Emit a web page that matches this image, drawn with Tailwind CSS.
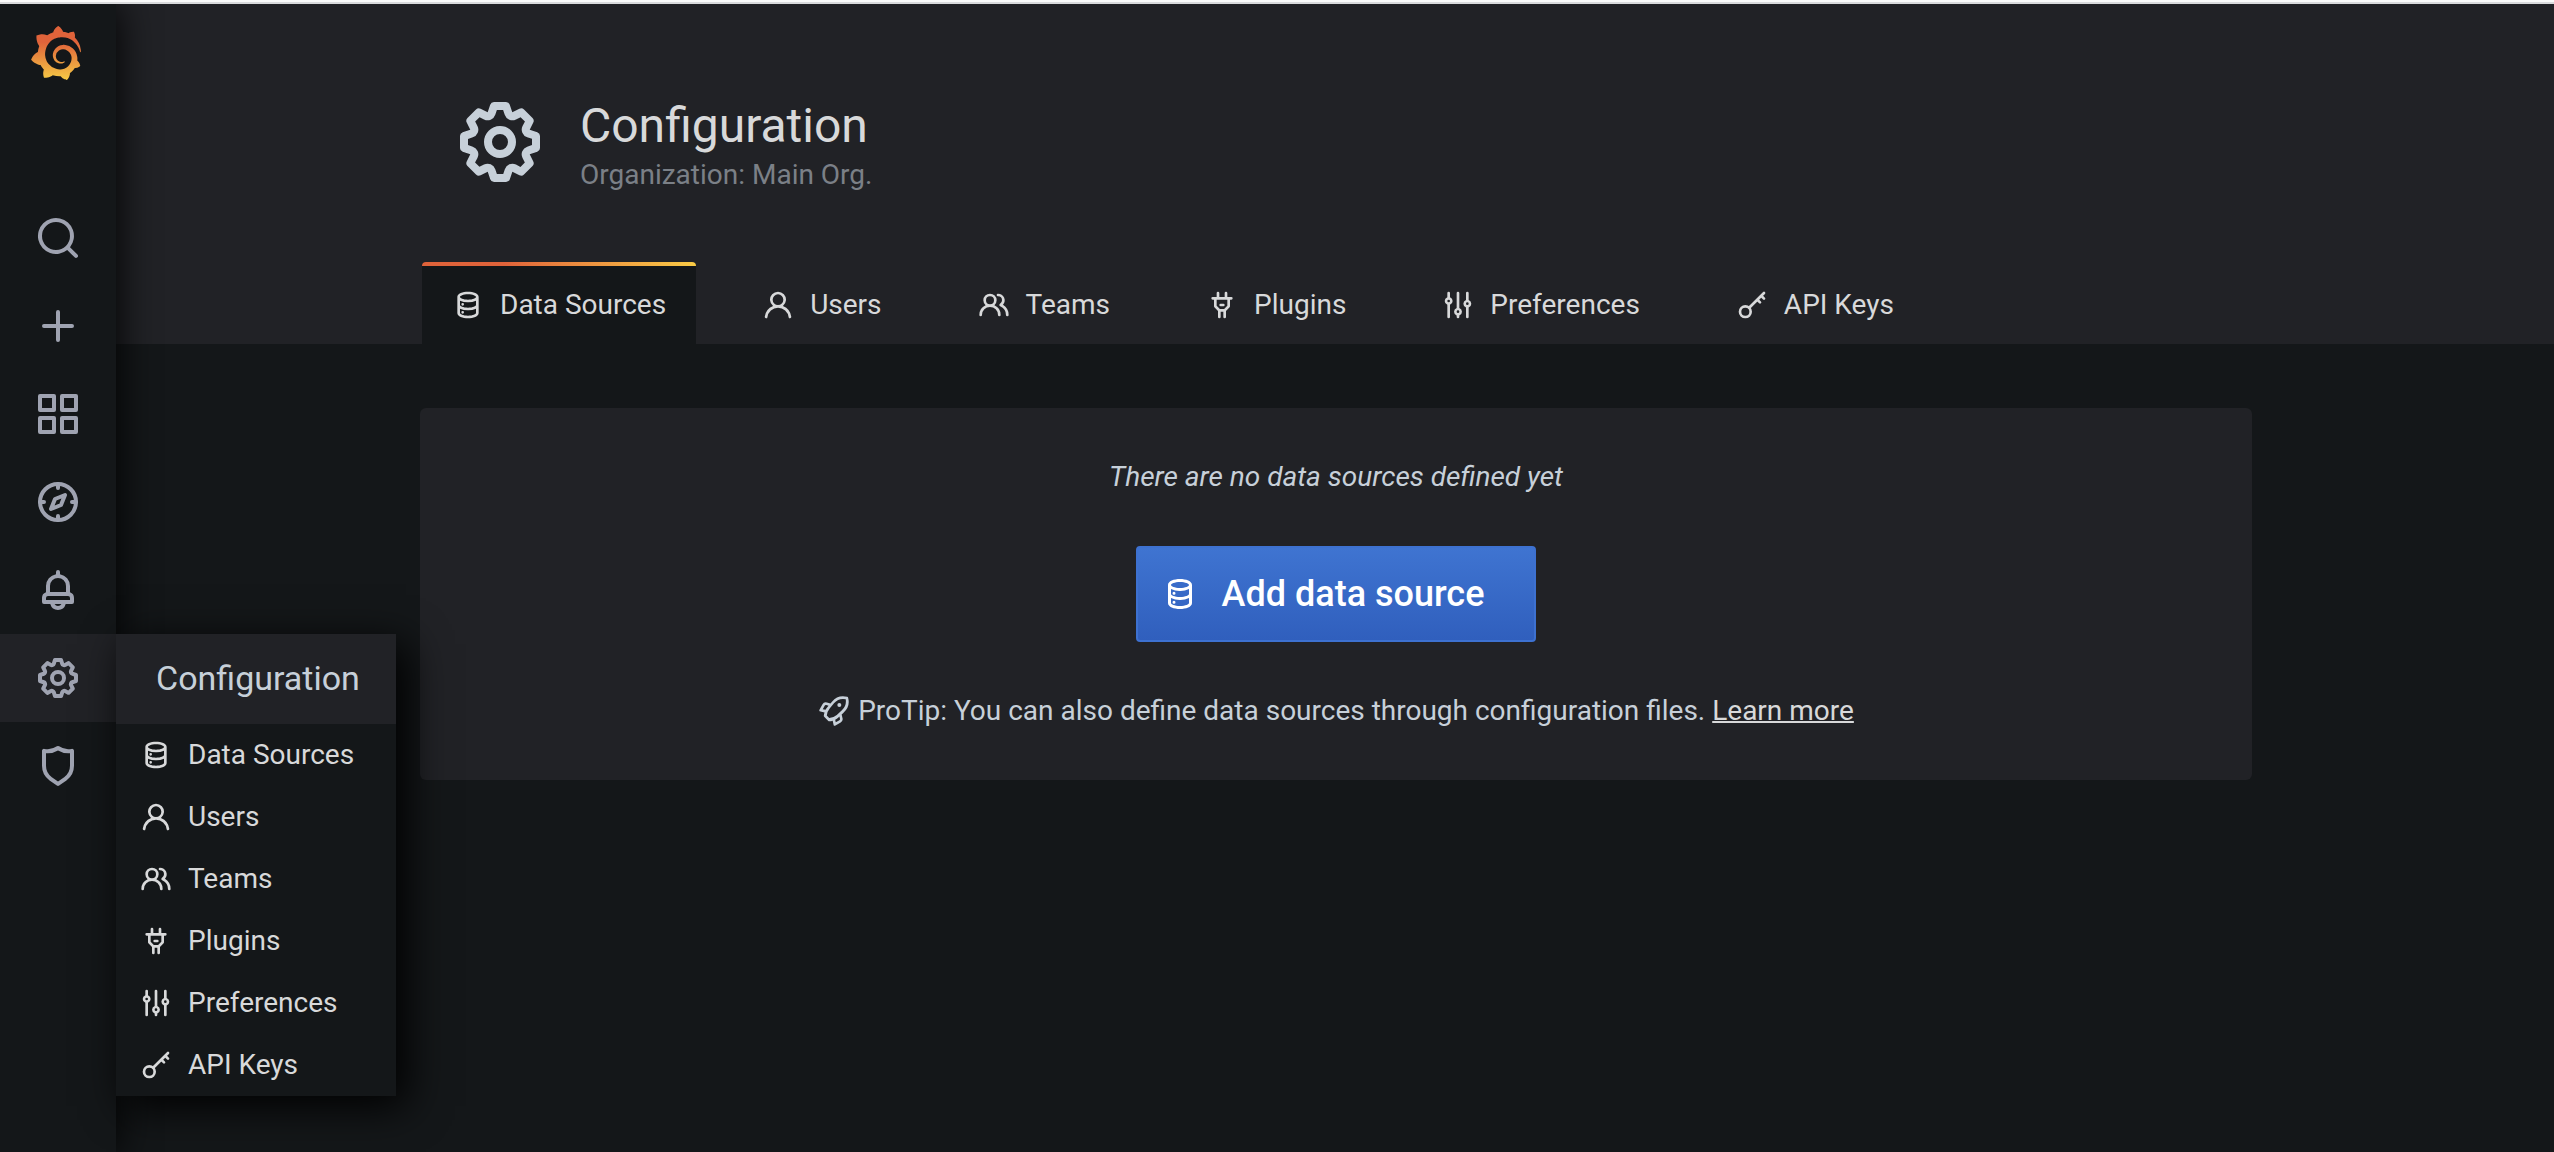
<!DOCTYPE html>
<html lang="en">
<head>
<meta charset="utf-8">
<meta name="viewport" content="width=device-width, initial-scale=1">
<title>Configuration: Data Sources - Grafana</title>
<script src="https://cdn.jsdelivr.net/npm/@tailwindcss/browser@4"></script>
</head>
<body class="min-h-screen flex flex-col bg-[#141719] font-[Roboto,sans-serif] text-[28px] leading-[42px] text-[#c7d0d9]">

<svg class="absolute size-0" aria-hidden="true">
  <defs>
  <linearGradient id="brand" x1="0" y1="0" x2="0" y2="1">
    <stop offset="0.3" stop-color="#e0633a"/>
    <stop offset="1" stop-color="#f5ca45"/>
  </linearGradient>
  </defs>
  <symbol id="logo" viewBox="0 0 24 24"><path d="M23.02 10.59a8.578 8.578 0 0 0-.862-3.034 8.911 8.911 0 0 0-1.789-2.445c.337-1.342-.413-2.505-.413-2.505-1.292-.08-2.113.4-2.416.62-.052-.02-.102-.044-.154-.064-.22-.089-.446-.172-.677-.247-.231-.073-.47-.14-.711-.197a9.867 9.867 0 0 0-.875-.161C14.557.753 12.94 0 12.94 0c-1.804 1.145-2.147 2.744-2.147 2.744l-.018.093c-.098.029-.2.057-.298.088-.138.042-.275.094-.413.143-.138.055-.275.107-.41.166a8.869 8.869 0 0 0-1.557.87l-.063-.029c-2.497-.955-4.716.195-4.716.195-.203 2.658.996 4.33 1.235 4.636a11.608 11.608 0 0 0-.607 2.635C1.636 12.677.953 15.014.953 15.014c1.926 2.214 4.171 2.351 4.171 2.351.003-.002.006-.002.006-.005.285.509.615.994.986 1.446.156.19.32.371.488.548-.704 2.009.099 3.68.099 3.68 2.144.08 3.553-.937 3.849-1.173a9.784 9.784 0 0 0 3.164.501h.08l.055-.003.107-.002.103-.005.003.002c1.01 1.44 2.788 1.646 2.788 1.646 1.264-1.332 1.337-2.653 1.337-2.94v-.058c0-.02-.003-.039-.003-.06.265-.187.52-.387.758-.6a7.875 7.875 0 0 0 1.415-1.7c1.43.083 2.437-.885 2.437-.885-.236-1.49-1.085-2.216-1.264-2.354l-.018-.013-.016-.013a.217.217 0 0 1-.031-.02c.008-.092.016-.18.02-.27.011-.162.016-.323.016-.48v-.253l-.005-.098-.008-.135a1.891 1.891 0 0 0-.01-.13c-.003-.042-.008-.083-.013-.125l-.016-.124-.018-.122a6.215 6.215 0 0 0-2.032-3.73 6.015 6.015 0 0 0-3.222-1.46 6.292 6.292 0 0 0-.85-.048l-.107.002h-.063l-.044.003-.104.008a4.777 4.777 0 0 0-3.335 1.695c-.332.4-.592.84-.768 1.297a4.594 4.594 0 0 0-.312 1.817l.003.091c.005.055.007.11.013.164a3.615 3.615 0 0 0 .698 1.82 3.53 3.53 0 0 0 1.827 1.282c.33.098.66.14.971.137.039 0 .078 0 .114-.002l.063-.003c.02 0 .041-.003.062-.003.034-.002.065-.007.099-.01.007 0 .018-.003.028-.003l.031-.005.06-.008a1.18 1.18 0 0 0 .112-.02c.036-.008.072-.013.109-.024a2.634 2.634 0 0 0 .914-.415c.028-.02.056-.041.085-.065a.248.248 0 0 0 .039-.35.244.244 0 0 0-.309-.06l-.078.042c-.09.044-.184.083-.283.116a2.476 2.476 0 0 1-.475.096c-.028.003-.054.006-.083.006l-.083.002c-.026 0-.054 0-.08-.002l-.102-.006h-.012l-.024.006c-.016-.003-.031-.003-.044-.006-.031-.002-.06-.007-.091-.01a2.59 2.59 0 0 1-.724-.213 2.557 2.557 0 0 1-.667-.438 2.52 2.52 0 0 1-.805-1.475 2.306 2.306 0 0 1-.029-.444l.006-.122v-.023l.002-.031c.003-.021.003-.04.005-.06a3.163 3.163 0 0 1 1.352-2.29 3.12 3.12 0 0 1 .937-.43 2.946 2.946 0 0 1 .776-.101h.06l.07.002.045.003h.026l.07.005a4.041 4.041 0 0 1 1.635.49 3.94 3.94 0 0 1 1.602 1.662 3.77 3.77 0 0 1 .397 1.414l.005.076.003.075c.002.026.002.05.002.075 0 .024.003.052 0 .07v.065l-.002.073-.008.174a6.195 6.195 0 0 1-.08.639 5.1 5.1 0 0 1-.267.927 5.31 5.31 0 0 1-.624 1.13 5.052 5.052 0 0 1-3.237 2.014 4.82 4.82 0 0 1-.649.066l-.039.003h-.287a6.607 6.607 0 0 1-1.716-.265 6.776 6.776 0 0 1-3.4-2.274 6.75 6.75 0 0 1-.746-1.15 6.616 6.616 0 0 1-.714-2.596l-.005-.083-.002-.02v-.056l-.003-.073v-.096l-.003-.104v-.07l.003-.163c.008-.22.026-.45.054-.678a8.707 8.707 0 0 1 .28-1.355c.128-.444.286-.872.473-1.277a7.04 7.04 0 0 1 1.456-2.1 5.925 5.925 0 0 1 .953-.763c.169-.111.343-.213.524-.306.089-.05.182-.091.273-.135.047-.02.093-.042.138-.062a7.177 7.177 0 0 1 .714-.267l.145-.045c.049-.015.098-.026.148-.041.098-.029.197-.052.296-.076.049-.013.1-.02.15-.033l.15-.032.151-.028.076-.013.075-.01.153-.024c.057-.01.114-.013.171-.023l.169-.021c.036-.003.073-.008.106-.01l.073-.008.036-.003.042-.002c.057-.003.114-.008.171-.01l.086-.006h.023l.037-.003.145-.007a7.999 7.999 0 0 1 1.708.125 7.917 7.917 0 0 1 2.048.68 8.253 8.253 0 0 1 1.672 1.09l.09.077.089.078c.06.052.114.107.171.159.057.052.112.106.166.16.052.055.107.107.159.164a8.671 8.671 0 0 1 1.41 1.978c.012.026.028.052.04.078l.04.078.075.156c.023.051.05.1.07.153l.065.15a8.848 8.848 0 0 1 .45 1.34.19.19 0 0 0 .201.142.186.186 0 0 0 .172-.184c.01-.246.002-.532-.024-.856z"/></symbol>
  <symbol id="search" viewBox="0 0 24 24"><path d="M21.71,20.29,18,16.61A9,9,0,1,0,16.61,18l3.68,3.68a1,1,0,0,0,1.42,0A1,1,0,0,0,21.71,20.29ZM11,18a7,7,0,1,1,7-7A7,7,0,0,1,11,18Z"/></symbol>
  <symbol id="plus" viewBox="0 0 24 24"><path d="M19,11H13V5a1,1,0,0,0-2,0v6H5a1,1,0,0,0,0,2h6v6a1,1,0,0,0,2,0V13h6a1,1,0,0,0,0-2Z"/></symbol>
  <symbol id="apps" viewBox="0 0 24 24"><path d="M10,13H3a1,1,0,0,0-1,1v7a1,1,0,0,0,1,1h7a1,1,0,0,0,1-1V14A1,1,0,0,0,10,13ZM9,20H4V15H9ZM21,2H14a1,1,0,0,0-1,1v7a1,1,0,0,0,1,1h7a1,1,0,0,0,1-1V3A1,1,0,0,0,21,2ZM20,9H15V4h5Zm1,4H14a1,1,0,0,0-1,1v7a1,1,0,0,0,1,1h7a1,1,0,0,0,1-1V14A1,1,0,0,0,21,13Zm-1,7H15V15h5ZM10,2H3A1,1,0,0,0,2,3v7a1,1,0,0,0,1,1h7a1,1,0,0,0,1-1V3A1,1,0,0,0,10,2ZM9,9H4V4H9Z"/></symbol>
  <symbol id="compass" viewBox="0 0 24 24"><g fill="none" stroke="currentColor" stroke-width="2" stroke-linecap="round" stroke-linejoin="round"><circle cx="12" cy="12" r="9"/><path d="M12 3v2M12 19v2M3 12h2M19 12h2M15.5 8.5l-2 5-5 2 2-5z"/></g></symbol>
  <symbol id="bell" viewBox="0 0 24 24"><path d="M18,13.18V10a6,6,0,0,0-5-5.91V3a1,1,0,0,0-2,0V4.09A6,6,0,0,0,6,10v3.18A3,3,0,0,0,4,16v2a1,1,0,0,0,1,1H8.14a4,4,0,0,0,7.72,0H19a1,1,0,0,0,1-1V16A3,3,0,0,0,18,13.18ZM8,10a4,4,0,0,1,8,0v3H8Zm4,10a2,2,0,0,1-1.72-1h3.44A2,2,0,0,1,12,20Zm6-3H6V16a1,1,0,0,1,1-1H17a1,1,0,0,1,1,1Z"/></symbol>
  <symbol id="cog" viewBox="0 0 24 24"><path d="M21.32,9.55l-1.89-.63.89-1.78A1,1,0,0,0,20.13,6L18,3.87a1,1,0,0,0-1.15-.19l-1.78.89-.63-1.89A1,1,0,0,0,13.5,2h-3a1,1,0,0,0-.95.68L8.92,4.57,7.14,3.68A1,1,0,0,0,6,3.87L3.87,6a1,1,0,0,0-.19,1.15l.89,1.78-1.89.63A1,1,0,0,0,2,10.5v3a1,1,0,0,0,.68.95l1.89.63-.89,1.78A1,1,0,0,0,3.87,18L6,20.13a1,1,0,0,0,1.15.19l1.78-.89.63,1.89a1,1,0,0,0,.95.68h3a1,1,0,0,0,.95-.68l.63-1.89,1.78.89A1,1,0,0,0,18,20.13L20.13,18a1,1,0,0,0,.19-1.15l-.89-1.78,1.89-.63A1,1,0,0,0,22,13.5v-3A1,1,0,0,0,21.32,9.55ZM20,12.78l-1.2.4A2,2,0,0,0,17.64,16l.57,1.14-1.1,1.1L16,17.64a2,2,0,0,0-2.79,1.16l-.4,1.2H11.22l-.4-1.2A2,2,0,0,0,8,17.64l-1.14.57-1.1-1.1L6.36,16A2,2,0,0,0,5.2,13.18L4,12.78V11.22l1.2-.4A2,2,0,0,0,6.36,8L5.79,6.89l1.1-1.1L8,6.36A2,2,0,0,0,10.82,5.2l.4-1.2h1.56l.4,1.2A2,2,0,0,0,16,6.36l1.14-.57,1.1,1.1L17.64,8a2,2,0,0,0,1.16,2.79l1.2.4ZM12,8a4,4,0,1,0,4,4A4,4,0,0,0,12,8Zm0,6a2,2,0,1,1,2-2A2,2,0,0,1,12,14Z"/></symbol>
  <symbol id="shield" viewBox="0 0 24 24"><path d="M19.63,3.65a1,1,0,0,0-.84-.2,8,8,0,0,1-6.22-1.27,1,1,0,0,0-1.14,0A8,8,0,0,1,5.21,3.45a1,1,0,0,0-.84.2A1,1,0,0,0,4,4.43v7.45a9,9,0,0,0,3.77,7.33l3.65,2.6a1,1,0,0,0,1.16,0l3.65-2.6A9,9,0,0,0,20,11.88V4.43A1,1,0,0,0,19.63,3.65ZM18,11.88a7,7,0,0,1-2.93,5.7L12,19.77,8.93,17.58A7,7,0,0,1,6,11.88V5.58a10,10,0,0,0,6-1.39,10,10,0,0,0,6,1.39Z"/></symbol>
  <symbol id="database" viewBox="0 0 24 24"><path d="M8,16.5a1,1,0,1,0,1,1A1,1,0,0,0,8,16.5ZM12,2C8,2,4,3.37,4,6V18c0,2.63,4,4,8,4s8-1.37,8-4V6C20,3.37,16,2,12,2Zm6,16c0,.71-2.28,2-6,2s-6-1.29-6-2V14.73A13.16,13.16,0,0,0,12,16a13.16,13.16,0,0,0,6-1.27Zm0-6c0,.71-2.28,2-6,2s-6-1.29-6-2V8.73A13.16,13.16,0,0,0,12,10a13.16,13.16,0,0,0,6-1.27ZM12,8C8.28,8,6,6.71,6,6s2.28-2,6-2,6,1.29,6,2S15.72,8,12,8ZM8,10.5a1,1,0,1,0,1,1A1,1,0,0,0,8,10.5Z"/></symbol>
  <symbol id="user" viewBox="0 0 24 24"><path d="M15.71,12.71a6,6,0,1,0-7.42,0,10,10,0,0,0-6.22,8.18,1,1,0,0,0,2,.22,8,8,0,0,1,15.9,0,1,1,0,0,0,1,.89h.11a1,1,0,0,0,.88-1.1A10,10,0,0,0,15.71,12.71ZM12,12a4,4,0,1,1,4-4A4,4,0,0,1,12,12Z"/></symbol>
  <symbol id="users" viewBox="0 0 24 24"><path d="M12.3,12.22A4.92,4.92,0,0,0,14,8.5a5,5,0,0,0-10,0,4.92,4.92,0,0,0,1.7,3.72A8,8,0,0,0,1,19.5a1,1,0,0,0,2,0,6,6,0,0,1,12,0,1,1,0,0,0,2,0A8,8,0,0,0,12.3,12.22ZM9,11.5a3,3,0,1,1,3-3A3,3,0,0,1,9,11.5Zm9.74.32A5,5,0,0,0,15,3.5a1,1,0,0,0,0,2,3,3,0,0,1,3,3,3,3,0,0,1-1.5,2.59,1,1,0,0,0-.5.84,1,1,0,0,0,.45.86l.39.26.13.07a7,7,0,0,1,4,6.38,1,1,0,0,0,2,0A9,9,0,0,0,18.74,11.82Z"/></symbol>
  <symbol id="plug" viewBox="0 0 24 24"><path d="M19,6H16V3a1,1,0,0,0-2,0V6H10V3A1,1,0,0,0,8,3V6H5A1,1,0,0,0,5,8H6v5a1,1,0,0,0,.29.71L9,16.41V21a1,1,0,0,0,2,0V17h2v4a1,1,0,0,0,2,0V16.41l2.71-2.7A1,1,0,0,0,18,13V8h1a1,1,0,0,0,0-2Zm-3,6.59L13.59,15H10.41L8,12.59V8h8ZM11,13h2a1,1,0,0,0,0-2H11a1,1,0,0,0,0,2Z"/></symbol>
  <symbol id="sliders" viewBox="0 0 24 24"><path d="M20,8.18V3a1,1,0,0,0-2,0V8.18a3,3,0,0,0,0,5.64V21a1,1,0,0,0,2,0V13.82a3,3,0,0,0,0-5.64ZM19,12a1,1,0,1,1,1-1A1,1,0,0,1,19,12Zm-6,2.18V3a1,1,0,0,0-2,0V14.18a3,3,0,0,0,0,5.64V21a1,1,0,0,0,2,0V19.82a3,3,0,0,0,0-5.64ZM12,18a1,1,0,1,1,1-1A1,1,0,0,1,12,18ZM6,6.18V3A1,1,0,0,0,4,3V6.18a3,3,0,0,0,0,5.64V21a1,1,0,0,0,2,0V11.82A3,3,0,0,0,6,6.18ZM5,10A1,1,0,1,1,6,9,1,1,0,0,1,5,10Z"/></symbol>
  <symbol id="key" viewBox="0 0 24 24"><g fill="none" stroke="currentColor" stroke-width="2" stroke-linecap="round" stroke-linejoin="round"><circle cx="7" cy="17" r="4"/><path d="M9.9 14.1L21 3M18.9 5.1L21 7.2M16 8l2 2"/></g></symbol>
  <symbol id="rocket" viewBox="0 0 24 24"><path fill-rule="evenodd" d="M22.601,2.062a1,1,0,0,0-.713-.713A11.252,11.252,0,0,0,10.47,4.972L9.354,6.296,6.75,5.668a2.777,2.777,0,0,0-3.387,1.357l-2.2,3.9a1,1,0,0,0,.661,1.469l3.074.659a13.42,13.42,0,0,0-.555,2.434,1,1,0,0,0,.284.836l3.1,3.1a1,1,0,0,0,.708.293c.028,0,.057,0,.086,0a12.169,12.169,0,0,0,2.492-.49l.644,3.004a1,1,0,0,0,1.469.661l3.905-2.202a3.035,3.035,0,0,0,1.375-3.304l-.668-2.76,1.237-1.137A11.204,11.204,0,0,0,22.601,2.062ZM3.572,10.723l1.556-2.766a.826.826,0,0,1,1.07-.375l1.718.416-.65.772A13.095,13.095,0,0,0,5.59,11.156ZM16.042,18.945l-2.715,1.532-.43-2.005a11.34,11.34,0,0,0,2.414-1.62l.743-.683.404,1.664A1.041,1.041,0,0,1,16.042,18.945ZM17.893,11.458l-3.8,3.493A9.774,9.774,0,0,1,8.42,17.265L6.6,15.431a10.083,10.083,0,0,1,2.3-5.556l3.1-3.633a9.263,9.263,0,0,1,8.79-3.03A9.21,9.21,0,0,1,17.893,11.458Z"/><circle cx="16" cy="7.5" r="1.5"/></symbol>
</svg>

<!-- Edge of the browser toolbar -->
<div class="relative z-20 h-1 shrink-0 border-b-2 border-[#d9dadc] bg-[#fafafa]"></div>

<div class="flex flex-1">
  <aside class="relative z-10 flex w-[116px] shrink-0 flex-col bg-[#141719] text-[#9fa3b1] shadow-[0_0_40px_#000]">
    <a href="#" aria-label="Home" class="flex h-[190px] justify-center pt-[22px] pr-1"><svg class="size-[54px]" fill="url(#brand)"><use href="#logo"/></svg></a>
    <nav aria-label="Main">
      <ul>
        <li><a href="#" aria-label="Search" class="flex h-[88px] items-center justify-center"><svg class="size-12 fill-current"><use href="#search"/></svg></a></li>
        <li><a href="#" aria-label="Create" class="flex h-[88px] items-center justify-center"><svg class="size-12 fill-current"><use href="#plus"/></svg></a></li>
        <li><a href="#" aria-label="Dashboards" class="flex h-[88px] items-center justify-center"><svg class="size-12 fill-current"><use href="#apps"/></svg></a></li>
        <li><a href="#" aria-label="Explore" class="flex h-[88px] items-center justify-center"><svg class="size-12 fill-current"><use href="#compass"/></svg></a></li>
        <li><a href="#" aria-label="Alerting" class="flex h-[88px] items-center justify-center"><svg class="size-12 fill-current"><use href="#bell"/></svg></a></li>
        <li class="relative bg-[#212226]">
          <a href="#" aria-label="Configuration" class="flex h-[88px] items-center justify-center"><svg class="size-12 fill-current"><use href="#cog"/></svg></a>
          <ul class="absolute top-0 left-full w-[280px] bg-[#141719] text-[#d8d9da] shadow-[10px_10px_40px_#000]">
            <li class="h-[90px] bg-[#212226] pl-10 text-[34px] leading-[88px] text-[#c7d0d9]"><a href="#">Configuration</a></li>
            <li><a href="#" class="flex h-[62px] items-center gap-4 px-6"><svg class="size-8 fill-current"><use href="#database"/></svg>Data Sources</a></li>
            <li><a href="#" class="flex h-[62px] items-center gap-4 px-6"><svg class="size-8 fill-current"><use href="#user"/></svg>Users</a></li>
            <li><a href="#" class="flex h-[62px] items-center gap-4 px-6"><svg class="size-8 fill-current"><use href="#users"/></svg>Teams</a></li>
            <li><a href="#" class="flex h-[62px] items-center gap-4 px-6"><svg class="size-8 fill-current"><use href="#plug"/></svg>Plugins</a></li>
            <li><a href="#" class="flex h-[62px] items-center gap-4 px-6"><svg class="size-8 fill-current"><use href="#sliders"/></svg>Preferences</a></li>
            <li><a href="#" class="flex h-[62px] items-center gap-4 px-6"><svg class="size-8 fill-current"><use href="#key"/></svg>API Keys</a></li>
          </ul>
        </li>
        <li><a href="#" aria-label="Server Admin" class="flex h-[88px] items-center justify-center"><svg class="size-12 fill-current"><use href="#shield"/></svg></a></li>
      </ul>
    </nav>
  </aside>

  <main class="min-w-0 flex-1">
    <header class="bg-[#212226] pl-0.5">
      <div class="mx-auto max-w-[1832px]">
        <div class="flex gap-8 px-8 pt-[90px] pb-[70px]">
          <svg class="size-24 shrink-0 fill-[#c7d0d9]"><use href="#cog"/></svg>
          <div>
            <h1 class="text-5xl leading-[64px] text-[#d8d9da]">Configuration</h1>
            <p class="leading-[34px] text-[#7b8087]">Organization: Main Org.</p>
          </div>
        </div>
        <nav aria-label="Configuration sections">
          <ul class="flex gap-9 px-0.5 text-[#d8d9da]">
            <li class="overflow-hidden rounded-t bg-[#141719]">
              <div class="h-1 bg-linear-to-r from-[#e0633a] from-30% to-[#f9cb45]"></div>
              <a href="#" aria-current="page" class="flex h-[78px] items-center gap-4 px-[30px]"><svg class="size-8 fill-current"><use href="#database"/></svg>Data Sources</a>
            </li>
            <li class="pt-1"><a href="#" class="flex h-[78px] items-center gap-4 px-[30px]"><svg class="size-8 fill-current"><use href="#user"/></svg>Users</a></li>
            <li class="pt-1"><a href="#" class="flex h-[78px] items-center gap-4 px-[30px]"><svg class="size-8 fill-current"><use href="#users"/></svg>Teams</a></li>
            <li class="pt-1"><a href="#" class="flex h-[78px] items-center gap-4 px-[30px]"><svg class="size-8 fill-current"><use href="#plug"/></svg>Plugins</a></li>
            <li class="pt-1"><a href="#" class="flex h-[78px] items-center gap-4 px-[30px]"><svg class="size-8 fill-current"><use href="#sliders"/></svg>Preferences</a></li>
            <li class="pt-1"><a href="#" class="flex h-[78px] items-center gap-4 px-[30px]"><svg class="size-8 fill-current"><use href="#key"/></svg>API Keys</a></li>
          </ul>
        </nav>
      </div>
    </header>

    <div class="pt-16 pl-0.5">
      <section class="mx-auto flex max-w-[1832px] flex-col items-center rounded-md bg-[#212226] py-12">
        <p class="italic">There are no data sources defined yet</p>
        <button type="button" class="mt-12 flex h-24 items-center gap-6 rounded border-2 border-[#3d71d0] bg-linear-to-b from-[#3f74d1] to-[#305fbd] pr-[50px] pl-6 text-4xl font-medium text-white"><svg class="size-9 fill-current"><use href="#database"/></svg>Add data source</button>
        <p class="mt-12 flex items-center gap-2"><svg class="size-8 fill-current"><use href="#rocket"/></svg><span>ProTip: You can also define data sources through configuration files. <a href="#" class="text-[#d8d9da] underline decoration-2">Learn more</a></span></p>
      </section>
    </div>
  </main>
</div>
</body>
</html>
